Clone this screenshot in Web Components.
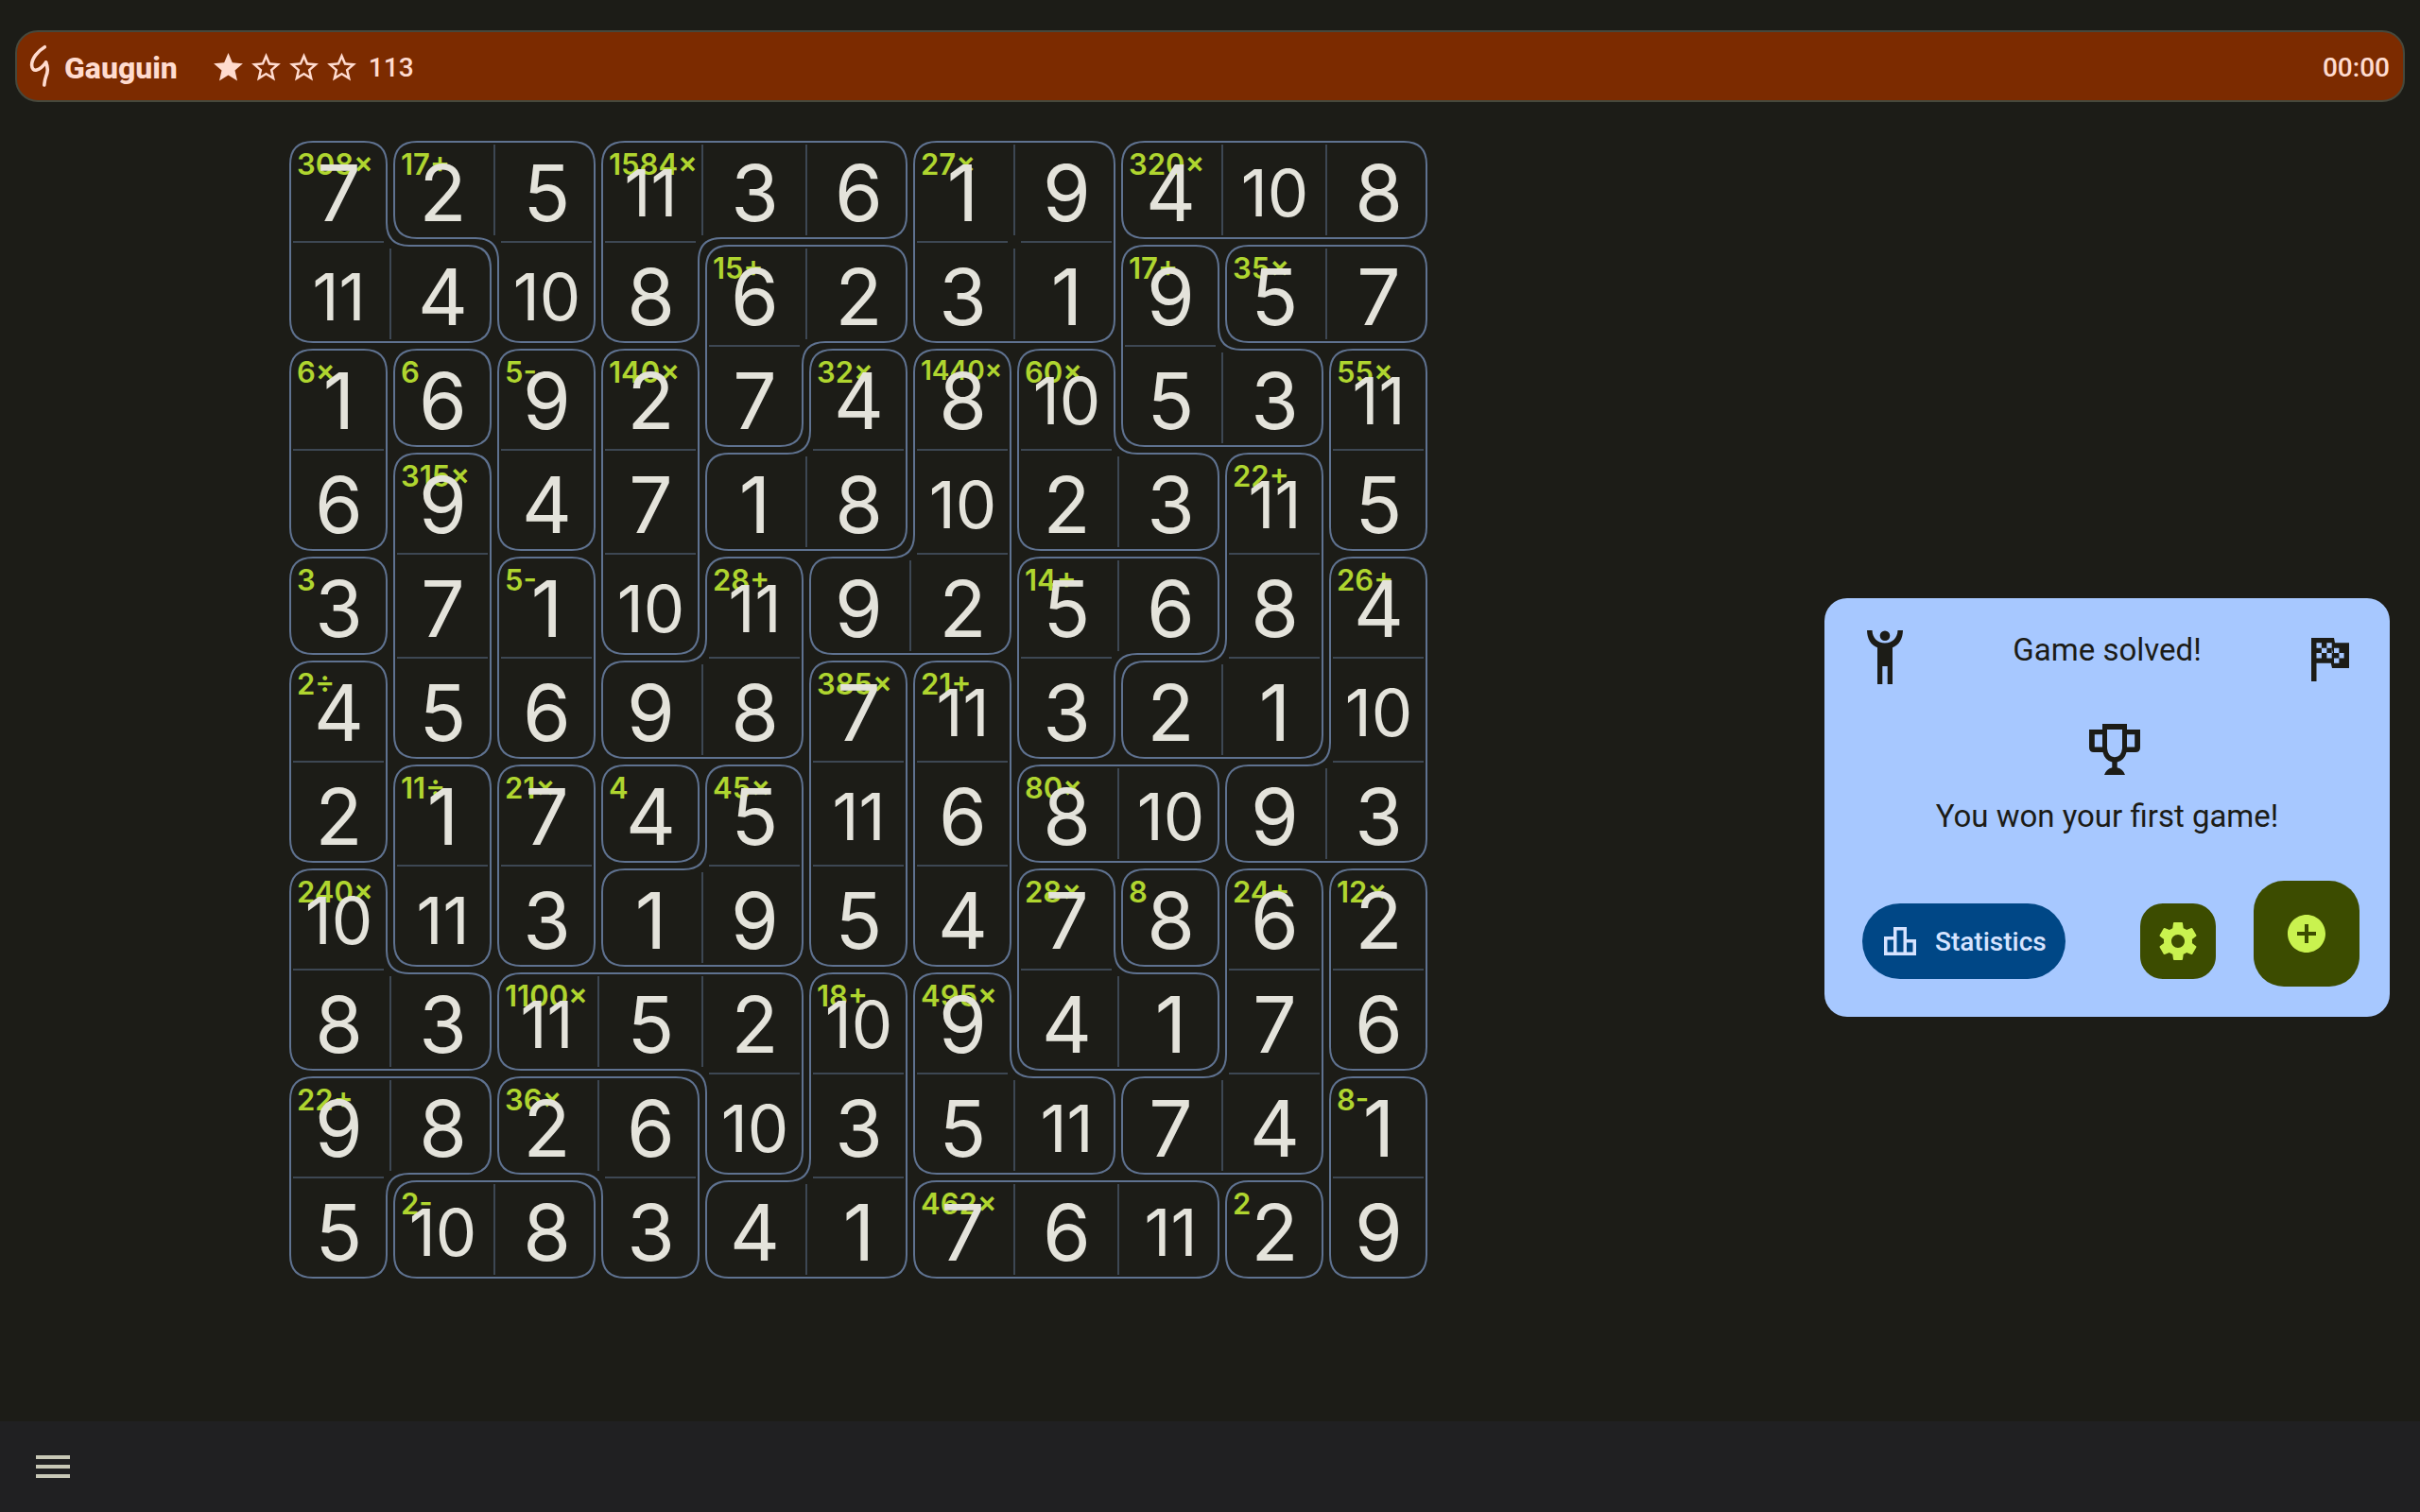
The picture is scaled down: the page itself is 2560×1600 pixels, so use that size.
<!DOCTYPE html>
<html lang="en">
<head>
<meta charset="utf-8">
<title>Gauguin</title>
<style>
  html, body { margin: 0; }
  body {
    --surface: #1c1c17;
    --on-surface: #e4e3db;
    --card: #a7c8ff;
    --cage: #5f7290;
    --divider: #3d4753;
    --lime: #afd52f;
    background: var(--surface);
    color: var(--on-surface);
    font-family: Roboto, "Liberation Sans", sans-serif;
  }
</style>
</head>
<body>
<gauguin-app></gauguin-app>

<script>
const define = (name, html, setup) => {
  const template = document.createElement('template');
  template.innerHTML = html;
  customElements.define(name, class extends HTMLElement {
    connectedCallback() {
      if (this.shadowRoot) return;
      this.attachShadow({ mode: 'open' }).append(template.content.cloneNode(true));
      if (setup) setup(this, this.shadowRoot);
    }
  });
};

const STAR = 'M12 17.27 18.18 21l-1.64-7.03L22 9.24l-7.19-.61L12 2 9.19 8.63 2 9.24l5.46 4.73L5.82 21z';
const STAR_OUTLINE = 'M22 9.24l-7.19-.62L12 2 9.19 8.63 2 9.24l5.46 4.73L5.82 21 12 17.27 18.18 21l-1.63-7.03L22 9.24zM12 15.4l-3.76 2.27 1-4.28-3.32-2.88 4.38-.38L12 6.1l1.71 4.04 4.38.38-3.32 2.88 1 4.28L12 15.4z';

define('star-rating', `
  <style>
    :host { display: flex; gap: 3px; }
    svg { width: 37px; height: 37px; fill: currentColor; }
  </style>`, (host, root) => {
  const filled = Number(host.getAttribute('value'));
  const max = Number(host.getAttribute('max'));
  host.setAttribute('role', 'img');
  host.setAttribute('aria-label', filled + ' / ' + max);
  for (let i = 0; i < max; i++) {
    root.innerHTML += `<svg viewBox="0 0 24 24"><path d="${i < filled ? STAR : STAR_OUTLINE}"/></svg>`;
  }
});

define('game-header', `
  <style>
    :host { display: block; }
    header {
      display: flex; align-items: center; box-sizing: border-box; height: 76px;
      padding: 0 14px 0 12px; border: 2px solid #46483c; border-radius: 24px;
      background: #7c2b00; color: #ffdbcf;
    }
    .logo { width: 24px; height: 48px; }
    h1 { margin: 0 0 0 14px; padding-top: 4px; font-size: 32px; line-height: 40px; font-weight: 800; }
    star-rating { margin-left: 35px; padding-top: 3px; }
    .variant { margin-left: 10px; }
    .time { margin-left: auto; }
    .variant, .time { padding-top: 3px; font-size: 28px; line-height: 40px; font-weight: 500; }
  </style>
  <header>
    <svg class="logo" viewBox="30 46 24 48" fill="none" stroke="currentColor" stroke-width="3.6" stroke-linecap="round" stroke-linejoin="round" aria-hidden="true">
      <path d="M47.3 49.7C40 54 33.4 62 33.6 69C34 77.5 42 75 48.6 66"/>
      <path d="M48.6 66C51.2 72 50.4 77 48.6 81C47.2 85 47.2 87 46.8 90"/>
    </svg>
    <h1><slot name="title"></slot></h1>
    <star-rating value="1" max="4"></star-rating>
    <span class="variant"><slot name="variant"></slot></span>
    <time class="time"><slot name="time"></slot></time>
  </header>`);

define('number-cell', `
  <style>
    :host { display: grid; font-family: Inter, "Liberation Sans", sans-serif; }
    .label, .value { grid-area: 1 / 1; }
    .label { padding: 12px 0 0 11px; font-size: 31px; line-height: 32px; font-weight: 600; color: var(--lime); }
    .label.long { font-size: 28px; line-height: 28px; }
    .value { padding: 7px 0 0 1px; text-align: center; font-size: 82px; line-height: 104px; }
    .value.wide { padding-top: 6px; font-size: 69px; }
  </style>
  <div class="label"></div>
  <div class="value"></div>`, (host, root) => {
  const label = host.getAttribute('label') || '';
  const value = host.getAttribute('value');
  const labelBox = root.querySelector('.label');
  const valueBox = root.querySelector('.value');
  labelBox.textContent = label;
  labelBox.classList.toggle('long', label === '1440×');
  valueBox.textContent = value;
  valueBox.classList.toggle('wide', value.length > 1);
});

const VALUES = `
7 2 5 11 3 6 1 9 4 10 8
11 4 10 8 6 2 3 1 9 5 7
1 6 9 2 7 4 8 10 5 3 11
6 9 4 7 1 8 10 2 3 11 5
3 7 1 10 11 9 2 5 6 8 4
4 5 6 9 8 7 11 3 2 1 10
2 1 7 4 5 11 6 8 10 9 3
10 11 3 1 9 5 4 7 8 6 2
8 3 11 5 2 10 9 4 1 7 6
9 8 2 6 10 3 5 11 7 4 1
5 10 8 3 4 1 7 6 11 2 9`.trim().split('\n').map(r => r.split(' '));

const CAGES = `
ABBCCCDDEEE
AABCFFDDGHH
IJKLFMNOGGP
IQKLMMNOORP
SQTLUNNVVRW
XQTUUYZVRRW
XabcdYZeeWW
fabddYZghij
ffkkklmggij
nnooklmmiip
nqqollrrrsp`.trim().split('\n');

const LABELS = {
  A: '308×', B: '17+', C: '1584×', D: '27×', E: '320×', F: '15+', G: '17+', H: '35×',
  I: '6×', J: '6', K: '5-', L: '140×', M: '32×', N: '1440×', O: '60×', P: '55×',
  Q: '315×', R: '22+', S: '3', T: '5-', U: '28+', V: '14+', W: '26+', X: '2÷',
  Y: '385×', Z: '21+', a: '11÷', b: '21×', c: '4', d: '45×', e: '80×', f: '240×',
  g: '28×', h: '8', i: '24+', j: '12×', k: '1100×', l: '18+', m: '495×', n: '22+',
  o: '36×', p: '8-', q: '2-', r: '462×', s: '2'
};

const CELL = 110, INSET = 4, ROUND = 24, TRIM = 7;
const cageAt = (r, c) => (CAGES[r] && CAGES[r][c]) || '';

/* Walks the outer edge of a cage clockwise and returns a rounded path just inside it. */
function cageOutline(id) {
  const next = new Map();
  const edge = (x1, y1, x2, y2) => next.set(x1 + ',' + y1, [x2, y2]);
  for (let r = 0; r < 11; r++) for (let c = 0; c < 11; c++) {
    if (cageAt(r, c) !== id) continue;
    if (cageAt(r - 1, c) !== id) edge(c, r, c + 1, r);
    if (cageAt(r, c + 1) !== id) edge(c + 1, r, c + 1, r + 1);
    if (cageAt(r + 1, c) !== id) edge(c + 1, r + 1, c, r + 1);
    if (cageAt(r, c - 1) !== id) edge(c, r + 1, c, r);
  }
  const start = [...next.keys()][0];
  const loop = [];
  let key = start;
  do { loop.push(key.split(',').map(Number)); key = next.get(key).join(','); } while (key !== start);
  const n = loop.length;
  const corners = [];
  for (let i = 0; i < n; i++) {
    const [px, py] = loop[(i + n - 1) % n], [x, y] = loop[i], [qx, qy] = loop[(i + 1) % n];
    const a = [x - px, y - py], b = [qx - x, qy - y];
    if (a[0] === b[0] && a[1] === b[1]) continue;
    /* the inside lies to the right of the walking direction */
    const cx = x * CELL + INSET * (-a[1] - b[1]);
    const cy = y * CELL + INSET * (a[0] + b[0]);
    corners.push({ cx, cy, a, b });
  }
  return corners.map(({ cx, cy, a, b }, i) =>
    `${i ? 'L' : 'M'}${cx - a[0] * ROUND} ${cy - a[1] * ROUND}Q${cx} ${cy} ${cx + b[0] * ROUND} ${cy + b[1] * ROUND}`
  ).join('') + 'Z';
}

function dividers() {
  let d = '';
  for (let r = 0; r < 11; r++) for (let c = 0; c < 11; c++) {
    const id = cageAt(r, c), x = c * CELL, y = r * CELL;
    if (cageAt(r, c + 1) === id) d += `M${x + CELL} ${y + TRIM}V${y + CELL - TRIM}`;
    if (cageAt(r + 1, c) === id) d += `M${x + TRIM} ${y + CELL}H${x + CELL - TRIM}`;
  }
  return d;
}

define('game-board', `
  <style>
    :host { display: grid; }
    svg, .cells { grid-area: 1 / 1; }
    svg { width: 1210px; height: 1210px; fill: none; stroke-width: 2; }
    .lines { stroke: var(--divider); }
    .cages { stroke: var(--cage); }
    .cells { display: grid; grid-template-columns: repeat(11, 110px); grid-auto-rows: 110px; }
  </style>
  <svg viewBox="0 0 1210 1210" aria-hidden="true"><path class="lines"/><path class="cages"/></svg>
  <div class="cells"></div>`, (host, root) => {
  root.querySelector('.lines').setAttribute('d', dividers());
  root.querySelector('.cages').setAttribute('d', Object.keys(LABELS).map(cageOutline).join(''));
  const seen = new Set();
  const cells = root.querySelector('.cells');
  VALUES.forEach((row, r) => row.forEach((value, c) => {
    const cell = document.createElement('number-cell');
    const id = cageAt(r, c);
    cell.setAttribute('value', value);
    if (!seen.has(id)) { cell.setAttribute('label', LABELS[id]); seen.add(id); }
    cells.append(cell);
  }));
});

define('stats-button', `
  <style>
    :host { display: block; }
    button {
      display: flex; align-items: center; gap: 20px; height: 80px; margin: 0; padding: 0 20px 0 23px;
      border: 0; border-radius: 40px; background: #004786; color: #d6e3ff;
      font: 500 28px/40px Roboto, "Liberation Sans", sans-serif;
    }
    svg { width: 34px; height: 30px; fill: currentColor; }
    span { padding-top: 3px; }
  </style>
  <button type="button">
    <svg viewBox="0 0 34 30" aria-hidden="true"><path fill-rule="evenodd" d="M0 10H10V0H24V13H34V30H0ZM3.5 13.5V26.5H10V13.5ZM13.5 3.5V26.5H20.5V3.5ZM24 16.5V26.5H30.5V16.5Z"/></svg>
    <span><slot></slot></span>
  </button>`);

define('fab-button', `
  <style>
    :host { display: block; }
    button {
      display: grid; place-items: center; width: 80px; height: 80px; margin: 0; padding: 0;
      border: 0; border-radius: 24px; background: #3c4c00; color: #c9f24f;
    }
    :host([large]) button { width: 112px; height: 112px; border-radius: 32px; }
    ::slotted(svg) { width: 48px; height: 48px; fill: currentColor; }
  </style>
  <button type="button"><slot></slot></button>`, (host, root) => {
  root.querySelector('button').setAttribute('aria-label', host.getAttribute('label'));
});

define('result-card', `
  <style>
    :host {
      display: flex; flex-direction: column; box-sizing: border-box; width: 598px;
      padding: 32px 32px 32px 40px; border-radius: 24px; background: var(--card); color: #1c1c17;
    }
    svg { display: block; fill: currentColor; }
    .top { display: flex; justify-content: space-between; align-items: flex-start; padding: 2px 11px 0 5px; }
    .person { width: 38px; height: 57px; }
    .flag { width: 40px; height: 46px; margin-top: 8px; }
    .trophy { align-self: center; width: 54px; height: 54px; margin: 42px 0 0 8px; }
    h2, p { margin: 0; font-size: 33px; line-height: 42px; font-weight: 400; text-align: center; }
    .message { margin-top: 23px; padding: 0 8px 1px 0; }
    .actions { display: flex; align-items: flex-end; margin-top: 46px; }
    stats-button { margin: 0 auto 8px 0; }
    .options { margin: 0 40px 8px 0; }
  </style>
  <div class="top">
    <svg class="person" viewBox="0 0 38 57" aria-hidden="true"><ellipse cx="19" cy="5.7" rx="5.3" ry="5.3"/><path d="M0 0H5.5C5.8 8 11 13.5 19 13.5S32.200 8 32.500 0H38C37.800 9 34 15.500 27 18.200V57H21.700V38H16.300V57H11V18.200C4 15.500 .2 9 0 0Z"/></svg>
    <h2><slot name="title"></slot></h2>
    <svg class="flag" viewBox="0 0 40 46" aria-hidden="true"><path fill-rule="evenodd" d="M0 0H24L25 5.300H40V32H22L20.800 26.700H5.500V46H0ZM5.500 5.300V10.700H10.900V5.300ZM16.400 5.300V10.700H21.700V5.300ZM10.900 10.700V16H16.400V10.700ZM5.500 16V21.400H10.900V16ZM16.400 16V21.400H21.700V16ZM24 10.700V16H29.400V10.700ZM29.400 16V21.400H34.600V16ZM24 21.400V26.700H29.400V21.400Z"/><path fill="#a7c8ff" d="M21.700 11L22.800 16H21.700Z"/></svg>
  </div>
  <svg class="trophy" viewBox="0 0 54 54" aria-hidden="true"><path fill-rule="evenodd" d="M14 0H40V6H54V25Q54 30 49 30H39.500Q37.500 38.500 29.700 40.500V46.300Q36 48 38 54H16Q18 48 24.300 46.300V40.500Q16.500 38.500 14.500 30H5Q0 30 0 25V6H14ZM5.800 11.300V24.500H14V11.300ZM40 11.300V24.500H48.200V11.300ZM19 6V26Q20 35 27 35.300Q34 35 35 26V6Z"/></svg>
  <p class="message"><slot name="message"></slot></p>
  <div class="actions">
    <stats-button>Statistics</stats-button>
    <fab-button class="options" label="Settings"><svg viewBox="0 0 24 24"><path d="M19.430 12.980c.04-.32.07-.64.07-.98s-.03-.66-.07-.98l2.110-1.650c.19-.15.24-.42.12-.64l-2-3.460c-.12-.22-.39-.3-.61-.22l-2.490 1c-.52-.4-1.080-.73-1.690-.98l-.38-2.650C14.460 2.180 14.250 2 14 2h-4c-.25 0-.46.18-.49.42l-.38 2.650c-.61.25-1.170.59-1.690.98l-2.490-1c-.23-.09-.49 0-.61.22l-2 3.460c-.13.22-.07.49.12.64l2.110 1.650c-.04.32-.07.65-.07.98s.03.66.07.98l-2.110 1.650c-.19.15-.24.42-.12.64l2 3.460c.12.22.39.3.61.22l2.490-1c.52.4 1.080.73 1.690.98l.38 2.650c.03.24.24.42.49.42h4c.25 0 .46-.18.49-.42l.38-2.650c.61-.25 1.170-.59 1.690-.98l2.490 1c.23.09.49 0 .61-.22l2-3.460c.12-.22.07-.49-.12-.64zM12 15.500c-1.930 0-3.500-1.570-3.500-3.500s1.570-3.500 3.500-3.500 3.500 1.570 3.500 3.500-1.570 3.500-3.500 3.500z"/></svg></fab-button>
    <fab-button large label="New game"><svg viewBox="0 0 24 24"><path d="M12 2C6.480 2 2 6.480 2 12s4.480 10 10 10 10-4.480 10-10S17.520 2 12 2zm5 11h-4v4h-2v-4H7v-2h4V7h2v4h4v2z"/></svg></fab-button>
  </div>`);

define('bottom-bar', `
  <style>
    :host { display: flex; align-items: center; height: 96px; padding-left: 32px; background: #202022; }
    button { display: grid; place-items: center; width: 48px; height: 48px; margin: 0; padding: 0; border: 0; background: none; color: #c8c8b7; }
    svg { width: 48px; height: 48px; fill: currentColor; }
  </style>
  <button type="button" aria-label="Menu"><svg viewBox="0 0 24 24"><path d="M3 18h18v-2H3v2zm0-5h18v-2H3v2zm0-7v2h18V6H3z"/></svg></button>`);

define('gauguin-app', `
  <style>
    :host { display: flex; flex-direction: column; min-height: 100vh; }
    game-header { margin: 32px 16px 0; }
    main { flex: 1; display: grid; grid-template-columns: 1fr auto; column-gap: 114px; padding-right: 32px; }
    game-board { justify-self: center; align-self: start; margin-top: 38px; }
    result-card { align-self: center; margin-top: 96px; }
  </style>
  <game-header>
    <span slot="title">Gauguin</span>
    <span slot="variant">113</span>
    <span slot="time">00:00</span>
  </game-header>
  <main>
    <game-board></game-board>
    <result-card>
      <span slot="title">Game solved!</span>
      <span slot="message">You won your first game!</span>
    </result-card>
  </main>
  <bottom-bar></bottom-bar>`);
</script>
</body>
</html>
